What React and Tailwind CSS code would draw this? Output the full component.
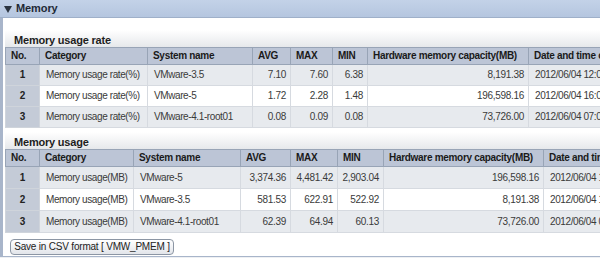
import React from "react";

const t1Cols = ["w-[34px]", "w-[108px]", "w-[105px]", "w-[38px]", "w-[42px]", "w-[35px]", "w-[161px]", "w-[130px]"];
const t2Cols = ["w-[34px]", "w-[94px]", "w-[107px]", "w-[50px]", "w-[47px]", "w-[46px]", "w-[160px]", "w-[120px]"];

const headers = ["No.", "Category", "System name", "AVG", "MAX", "MIN", "Hardware memory capacity(MB)", "Date and time of MAX"];

const t1Rows = [
  ["1", "Memory usage rate(%)", "VMware-3.5", "7.10", "7.60", "6.38", "8,191.38", "2012/06/04 12:00"],
  ["2", "Memory usage rate(%)", "VMware-5", "1.72", "2.28", "1.48", "196,598.16", "2012/06/04 16:00"],
  ["3", "Memory usage rate(%)", "VMware-4.1-root01", "0.08", "0.09", "0.08", "73,726.00", "2012/06/04 07:00"],
];

const t2Rows = [
  ["1", "Memory usage(MB)", "VMware-5", "3,374.36", "4,481.42", "2,903.04", "196,598.16", "2012/06/04 16:00"],
  ["2", "Memory usage(MB)", "VMware-3.5", "581.53", "622.91", "522.92", "8,191.38", "2012/06/04 12:00"],
  ["3", "Memory usage(MB)", "VMware-4.1-root01", "62.39", "64.94", "60.13", "73,726.00", "2012/06/04 07:00"],
];

function Heading({ children }) {
  return (
    <div className="h-[17px] flex items-end pl-[9px] pb-[1px] bg-gradient-to-b from-white to-[#e6e8eb] text-[11px] font-bold text-[#1e1e1e] tracking-[-0.2px] leading-none">
      {children}
    </div>
  );
}

function DataTable({ cols, rows, tableW, rowH }) {
  return (
    <table className={`table-fixed border-collapse ${tableW}`}>
      <colgroup>
        {cols.map((c, i) => (
          <col key={i} className={c} />
        ))}
      </colgroup>
      <thead>
        <tr className="h-[17px] bg-[#bcc5d6]">
          {headers.map((h, i) => (
            <th
              key={i}
              className="border border-[#98a4b6] px-[5px] text-left text-[10px] font-bold text-[#1a1a1a] whitespace-nowrap overflow-hidden tracking-[-0.3px] leading-none"
            >
              {h}
            </th>
          ))}
        </tr>
      </thead>
      <tbody>
        {rows.map((r, ri) => (
          <tr key={ri} className={`${rowH} ${ri % 2 === 1 ? "bg-white" : "bg-[#e7eaee]"}`}>
            {r.map((v, ci) => (
              <td
                key={ci}
                className={
                  ci === 0
                    ? "border border-[#cfd4db] bg-[#c4cbd7] text-center text-[10px] font-bold text-[#222] leading-none"
                    : ci >= 3 && ci <= 6
                    ? "border border-[#d6dae0] px-[4px] text-right text-[10px] text-[#3a3a3a] whitespace-nowrap overflow-hidden tracking-[-0.3px] leading-none"
                    : "border border-[#d6dae0] px-[6px] text-left text-[10px] text-[#3a3a3a] whitespace-nowrap overflow-hidden tracking-[-0.4px] leading-none"
                }
              >
                {v}
              </td>
            ))}
          </tr>
        ))}
      </tbody>
    </table>
  );
}

export default function App() {
  return (
    <div className="w-[600px] h-[258px] overflow-hidden bg-[#eef0f3] font-['Liberation_Sans',Arial,sans-serif]">
      <div className="h-[18px] bg-gradient-to-b from-[#c3d2e8] to-[#b5c6df] border-b border-[#9fb0c9] flex items-center pl-[4px] gap-[4px]">
        <svg width="8" height="7" viewBox="0 0 8 7" className="mt-[1px]">
          <path d="M0 0 L8 0 L4 7 Z" fill="#2b3440" />
        </svg>
        <span className="text-[11px] font-bold text-[#1f2a36] tracking-[-0.1px] leading-none">Memory</span>
      </div>
      <div className="h-[239px] bg-white border-l-[3px] border-b border-[#a8b5ca] pl-[2px] pt-[12px] overflow-hidden">
        <Heading>Memory usage rate</Heading>
        <DataTable cols={t1Cols} rows={t1Rows} tableW="w-[653px]" rowH="h-[21px]" />
        <div className="h-[4px]" />
        <Heading>Memory usage</Heading>
        <DataTable cols={t2Cols} rows={t2Rows} tableW="w-[658px]" rowH="h-[22px]" />
        <button className="mt-[3px] ml-[5px] h-[16px] w-[164px] rounded-[4px] border border-[#8c96a4] bg-gradient-to-b from-white to-[#e2e5ea] text-[10px] text-[#222] leading-none tracking-[-0.2px]">
          Save in CSV format [ VMW_PMEM ]
        </button>
      </div>
    </div>
  );
}
